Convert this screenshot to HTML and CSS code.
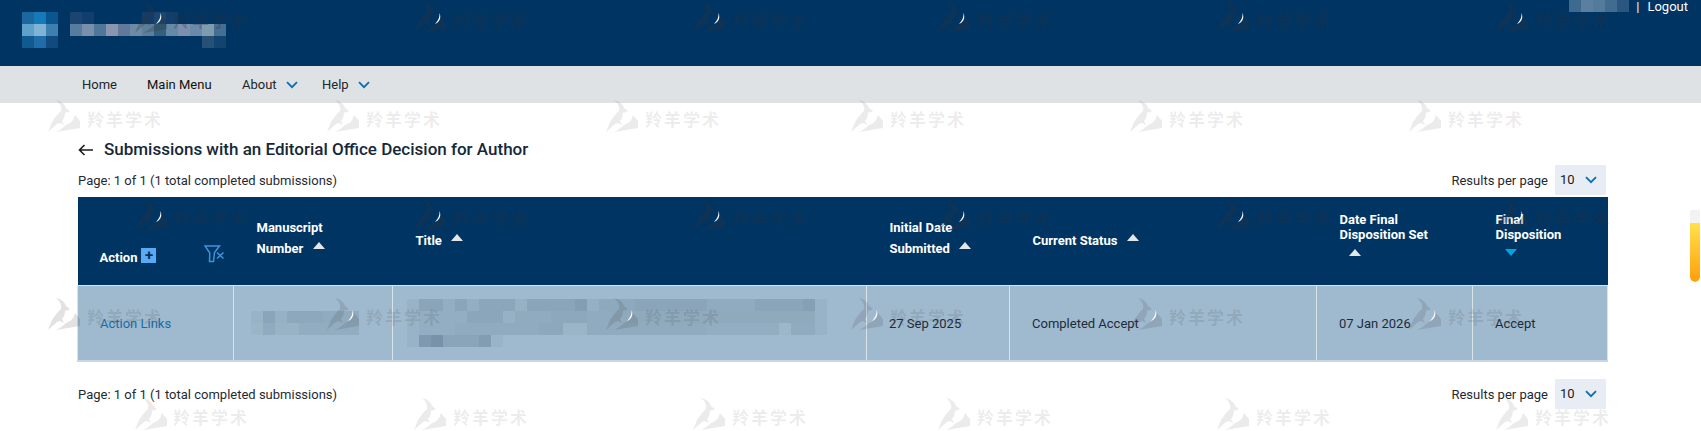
FILE: index.html
```html
<!DOCTYPE html>
<html lang="en">
<head>
    <meta charset="UTF-8">
    <meta name="viewport" content="width=device-width, initial-scale=1.0">
    <title>Submissions with an Editorial Office Decision for Author</title>
    <link rel="stylesheet" href="styles.css">
</head>
<body>
    <header class="topbar">
        <svg class="brand" width="206" height="36" viewBox="0 0 206 36">
            <rect x="0" y="0" width="12" height="12" fill="#1d679f"/><rect x="12" y="0" width="12" height="12" fill="#167ab8"/><rect x="24" y="0" width="12" height="12" fill="#0c5690"/>
            <rect x="0" y="12" width="12" height="12" fill="#5fa2c9"/><rect x="12" y="12" width="12" height="12" fill="#80b3d5"/><rect x="24" y="12" width="12" height="12" fill="#3d80b0"/>
            <rect x="0" y="24" width="12" height="12" fill="#105a92"/><rect x="12" y="24" width="12" height="12" fill="#1f6ca8"/><rect x="24" y="24" width="12" height="12" fill="#114a7e"/>
            <rect x="48" y="0" width="12" height="12" fill="#1b4470"/><rect x="60" y="0" width="12" height="12" fill="#113e6c"/><rect x="120" y="0" width="12" height="12" fill="#123d68"/><rect x="132" y="0" width="12" height="12" fill="#1a4670"/><rect x="144" y="0" width="12" height="12" fill="#123e6b"/>
            <rect x="48" y="12" width="12" height="12" fill="#567d9d"/><rect x="60" y="12" width="12" height="12" fill="#7890ac"/><rect x="72" y="12" width="12" height="12" fill="#4f7799"/><rect x="84" y="12" width="12" height="12" fill="#8a96b0"/><rect x="96" y="12" width="12" height="12" fill="#62799c"/><rect x="108" y="12" width="12" height="12" fill="#6d8ba6"/><rect x="120" y="12" width="12" height="12" fill="#5d7f9a"/><rect x="132" y="12" width="12" height="12" fill="#33607f"/><rect x="144" y="12" width="12" height="12" fill="#648aa8"/><rect x="156" y="12" width="12" height="12" fill="#7c8fae"/><rect x="168" y="12" width="12" height="12" fill="#6b89a8"/><rect x="180" y="12" width="12" height="12" fill="#7d9cae"/><rect x="192" y="12" width="12" height="12" fill="#456f90"/>
            <rect x="180" y="24" width="12" height="12" fill="#265176"/><rect x="192" y="24" width="12" height="12" fill="#134470"/>
        </svg>
        <div class="user-links">
            <svg class="user-blur" width="60" height="12" viewBox="0 0 60 12">
                <rect x="0" y="0" width="12" height="12" fill="#3f6a8f"/><rect x="12" y="0" width="12" height="12" fill="#5a7fa0"/><rect x="24" y="0" width="12" height="12" fill="#547a9c"/><rect x="36" y="0" width="12" height="12" fill="#416c90"/><rect x="48" y="0" width="12" height="12" fill="#2a5680"/>
            </svg>
            <span class="sep">|</span>
            <a href="#">Logout</a>
        </div>
    </header>

    <nav class="mainnav">
        <a href="#" class="nav-home">Home</a>
        <a href="#" class="nav-menu">Main Menu</a>
        <a href="#" class="nav-about">About <svg class="chev" width="12" height="8" viewBox="0 0 12 8"><path d="M1 1.2l5 5 5-5"/></svg></a>
        <a href="#" class="nav-help">Help <svg class="chev" width="12" height="8" viewBox="0 0 12 8"><path d="M1 1.2l5 5 5-5"/></svg></a>
    </nav>

    <main class="content">
        <h1 class="page-title">
            <svg class="back" width="15" height="12" viewBox="0 0 15 12"><path d="M15 6H1.5M6.5 1L1.5 6l5 5"/></svg>
            Submissions with an Editorial Office Decision for Author
        </h1>

        <div class="pager pager-top">
            <span>Page: 1 of 1 (1 total completed submissions)</span>
            <div class="per-page">
                <span>Results per page</span>
                <div class="select">10 <svg class="chev" width="12" height="8" viewBox="0 0 12 8"><path d="M1 1.2l5 5 5-5"/></svg></div>
            </div>
        </div>

        <table class="results">
            <colgroup>
                <col class="c1"><col class="c2"><col class="c3"><col class="c4"><col class="c5"><col class="c6"><col class="c7">
            </colgroup>
            <thead>
                <tr>
                    <th class="th-action">
                        <div class="action-head">
                            <span>Action</span>
                            <span class="plus">+</span>
                            <svg class="filter-x" width="21" height="18" viewBox="0 0 21 18"><path d="M1 1h14.500l-5 6.500-1 9H5.500L5.800 8z"/><path d="M13 7.500l6.500 6M19.500 7.500L13 13.500"/></svg>
                        </div>
                    </th>
                    <th class="th-two">Manuscript<br>Number <i class="sort-up"></i></th>
                    <th>Title <i class="sort-up"></i></th>
                    <th class="th-two">Initial Date<br>Submitted <i class="sort-up"></i></th>
                    <th>Current Status <i class="sort-up sort-wide"></i></th>
                    <th class="th-tight">Date Final<br>Disposition Set<i class="sort-up sort-block"></i></th>
                    <th class="th-tight">Final<br>Disposition<i class="sort-down sort-block"></i></th>
                </tr>
            </thead>
            <tbody>
                <tr>
                    <td><a href="#">Action Links</a></td>
                    <td class="blur-cell">
                        <svg class="ms-blur" width="108" height="24" viewBox="0 0 108 24">
                            <rect x="0" y="0" width="12" height="12" fill="#98b2c6"/><rect x="12" y="0" width="12" height="12" fill="#8aa5ba"/><rect x="24" y="0" width="12" height="12" fill="#96b0c4"/><rect x="36" y="0" width="36" height="12" fill="#8da8bd"/><rect x="72" y="0" width="36" height="12" fill="#90abbf"/>
                            <rect x="0" y="12" width="12" height="12" fill="#9ab4c8"/><rect x="12" y="12" width="12" height="12" fill="#90abc0"/><rect x="24" y="12" width="24" height="12" fill="#98b2c6"/><rect x="48" y="12" width="60" height="12" fill="#92adc1"/>
                        </svg>
                    </td>
                    <td class="blur-cell">
                        <svg class="title-blur" width="420" height="48" viewBox="0 0 420 48">
                            <rect x="0" y="0" width="12" height="36" fill="#98b3c7"/><rect x="12" y="0" width="24" height="12" fill="#8aa4b9"/><rect x="36" y="0" width="36" height="12" fill="#93aec2"/><rect x="48" y="0" width="12" height="12" fill="#8aa5ba"/><rect x="72" y="0" width="36" height="12" fill="#8ba5ba"/><rect x="108" y="0" width="12" height="12" fill="#96b0c4"/><rect x="120" y="0" width="60" height="12" fill="#8aa4b9"/><rect x="168" y="0" width="12" height="12" fill="#839eb3"/><rect x="180" y="0" width="12" height="12" fill="#95afc3"/><rect x="192" y="0" width="36" height="12" fill="#8ea9bd"/><rect x="228" y="0" width="72" height="12" fill="#8aa5ba"/><rect x="300" y="0" width="48" height="12" fill="#90abbf"/><rect x="348" y="0" width="48" height="12" fill="#8aa4b9"/><rect x="396" y="0" width="12" height="12" fill="#869fb4"/><rect x="408" y="0" width="12" height="36" fill="#98b3c7"/>
                            <rect x="12" y="12" width="48" height="12" fill="#93aec2"/><rect x="60" y="12" width="12" height="12" fill="#8ba6bb"/><rect x="72" y="12" width="24" height="12" fill="#8ba6bb"/><rect x="96" y="12" width="12" height="12" fill="#96b0c4"/><rect x="108" y="12" width="36" height="12" fill="#90abbf"/><rect x="144" y="12" width="36" height="12" fill="#8da8bc"/><rect x="180" y="12" width="24" height="12" fill="#90abbf"/><rect x="204" y="12" width="204" height="12" fill="#8fa9bd"/>
                            <rect x="12" y="24" width="36" height="12" fill="#93aec2"/><rect x="48" y="24" width="84" height="12" fill="#90abbf"/><rect x="132" y="24" width="24" height="12" fill="#8da8bc"/><rect x="156" y="24" width="24" height="12" fill="#9ab4c8"/><rect x="180" y="24" width="120" height="12" fill="#90abbf"/><rect x="300" y="24" width="72" height="12" fill="#93aec2"/><rect x="372" y="24" width="12" height="12" fill="#9cb6ca"/><rect x="384" y="24" width="24" height="12" fill="#90abbf"/>
                            <rect x="0" y="36" width="12" height="12" fill="#98b3c7"/><rect x="12" y="36" width="12" height="12" fill="#7f9ab0"/><rect x="24" y="36" width="12" height="12" fill="#7792a9"/><rect x="36" y="36" width="36" height="12" fill="#8aa4b9"/><rect x="72" y="36" width="12" height="12" fill="#829db2"/><rect x="84" y="36" width="12" height="12" fill="#99b3c7"/>
                        </svg>
                    </td>
                    <td>27 Sep 2025</td>
                    <td>Completed Accept</td>
                    <td>07 Jan 2026</td>
                    <td>Accept</td>
                </tr>
            </tbody>
        </table>

        <div class="pager pager-bottom">
            <span>Page: 1 of 1 (1 total completed submissions)</span>
            <div class="per-page">
                <span>Results per page</span>
                <div class="select">10 <svg class="chev" width="12" height="8" viewBox="0 0 12 8"><path d="M1 1.2l5 5 5-5"/></svg></div>
            </div>
        </div>
    </main>

    <div class="side-scroll"><div class="side-thumb"></div></div>

    <!-- watermark sits over the whole page -->
    <svg class="watermark" width="1701" height="431" viewBox="0 0 1701 431">
        <defs>
            <g id="mark">
                <path d="M9 0C14 1 18 4 19 8L23 11 20 12.500H18C18 16 17 19 15 21L17 25 13 23 10 24 1 32 5 22C8 18 10 14 14 11 15 7 13 3 9 0Z"/>
                <path d="M19 25C23 24 26 21 28 15L33 21V28L9 32C13 30 16 28 19 25Z"/>
                <path class="wm-glint" d="M26.500 12C27 16 25 20 22 23 26.500 21 28.500 17 26.500 12Z"/>
            </g>
        </defs>
        <g class="wm-dark">
            <g transform="translate(134 1)"><use href="#mark"/><text x="39" y="26">羚羊学术</text></g>
            <g transform="translate(413 1)"><use href="#mark"/><text x="40" y="26">羚羊学术</text></g>
            <g transform="translate(692 1)"><use href="#mark"/><text x="40" y="26">羚羊学术</text></g>
            <g transform="translate(937 1)"><use href="#mark"/><text x="40" y="26">羚羊学术</text></g>
            <g transform="translate(1216 1)"><use href="#mark"/><text x="40" y="26">羚羊学术</text></g>
            <g transform="translate(1495 1)"><use href="#mark"/><text x="40" y="26">羚羊学术</text></g>

            <g transform="translate(134 199)"><use href="#mark"/><text x="39" y="26">羚羊学术</text></g>
            <g transform="translate(413 199)"><use href="#mark"/><text x="40" y="26">羚羊学术</text></g>
            <g transform="translate(692 199)"><use href="#mark"/><text x="40" y="26">羚羊学术</text></g>
            <g transform="translate(937 199)"><use href="#mark"/><text x="40" y="26">羚羊学术</text></g>
            <g transform="translate(1216 199)"><use href="#mark"/><text x="40" y="26">羚羊学术</text></g>
            <g transform="translate(1495 199)"><use href="#mark"/><text x="40" y="26">羚羊学术</text></g>
        </g>
        <g class="wm-light">
            <g transform="translate(47 100)"><use href="#mark"/><text x="40" y="26">羚羊学术</text></g>
            <g transform="translate(326 100)"><use href="#mark"/><text x="40" y="26">羚羊学术</text></g>
            <g transform="translate(605 100)"><use href="#mark"/><text x="40" y="26">羚羊学术</text></g>
            <g transform="translate(850 100)"><use href="#mark"/><text x="40" y="26">羚羊学术</text></g>
            <g transform="translate(1129 100)"><use href="#mark"/><text x="40" y="26">羚羊学术</text></g>
            <g transform="translate(1408 100)"><use href="#mark"/><text x="40" y="26">羚羊学术</text></g>

            <g transform="translate(134 398)"><use href="#mark"/><text x="39" y="26">羚羊学术</text></g>
            <g transform="translate(413 398)"><use href="#mark"/><text x="40" y="26">羚羊学术</text></g>
            <g transform="translate(692 398)"><use href="#mark"/><text x="40" y="26">羚羊学术</text></g>
            <g transform="translate(937 398)"><use href="#mark"/><text x="40" y="26">羚羊学术</text></g>
            <g transform="translate(1216 398)"><use href="#mark"/><text x="40" y="26">羚羊学术</text></g>
            <g transform="translate(1495 398)"><use href="#mark"/><text x="40" y="26">羚羊学术</text></g>
        </g>
        <g class="wm-mid">
            <g transform="translate(47 298)"><use href="#mark"/><text x="40" y="26">羚羊学术</text></g>
            <g transform="translate(326 298)"><use href="#mark"/><text x="40" y="26">羚羊学术</text></g>
            <g transform="translate(605 298)"><use href="#mark"/><text x="40" y="26">羚羊学术</text></g>
            <g transform="translate(850 298)"><use href="#mark"/><text x="40" y="26">羚羊学术</text></g>
            <g transform="translate(1129 298)"><use href="#mark"/><text x="40" y="26">羚羊学术</text></g>
            <g transform="translate(1408 298)"><use href="#mark"/><text x="40" y="26">羚羊学术</text></g>
        </g>
    </svg>
</body>
</html>
```

FILE: styles.css
```css
html, body {
    margin: 0;
    padding: 0;
    height: 431px;
    overflow: hidden;
    background: #fff;
}
body {
    position: relative;
    font-family: Roboto, "Liberation Sans", sans-serif;
    font-size: 13px;
    color: #1f2a33;
}
a {
    text-decoration: none;
    color: inherit;
}

/* top bar */
.topbar {
    height: 66px;
    box-sizing: border-box;
    background: #003462;
    display: flex;
    justify-content: space-between;
    align-items: flex-start;
    padding: 0 13px 0 22px;
}
.brand {
    display: block;
    margin-top: 12px;
}
.user-links {
    display: flex;
    align-items: flex-start;
    color: #fff;
    line-height: 14px;
}
.user-blur {
    display: block;
    margin-right: 7px;
}
.sep {
    margin-right: 8px;
}

/* nav */
.mainnav {
    height: 37px;
    background: #dee2e5;
    display: flex;
    align-items: center;
    padding-left: 82px;
    color: #20262c;
}
.nav-home {
    width: 65px;
}
.nav-menu {
    width: 95px;
    color: #111;
}
.nav-about {
    width: 80px;
}
.chev {
    fill: none;
    stroke: #0b6fae;
    stroke-width: 1.8;
}
.mainnav .chev {
    margin-left: 6px;
}

/* content */
.content {
    padding: 0 94px 0 77px;
}
.page-title {
    margin: 0;
    padding: 37px 0 0 1px;
    font-size: 17px;
    line-height: 19px;
    font-weight: 500;
    color: #15283a;
    display: flex;
    align-items: center;
}
.back {
    fill: none;
    stroke: #1b1b1b;
    stroke-width: 1.6;
    margin-right: 11px;
}
.pager {
    display: flex;
    justify-content: space-between;
    align-items: center;
    height: 30px;
    padding-left: 1px;
    padding-right: 1px;
}
.pager-top {
    margin-top: 6px;
}
.pager-bottom {
    margin-top: 17px;
}
.per-page {
    display: flex;
    align-items: center;
}
.select {
    width: 51px;
    height: 30px;
    box-sizing: border-box;
    margin-left: 7px;
    padding-left: 5px;
    background: #e8edf5;
    line-height: 30px;
    display: flex;
    align-items: center;
    color: #1a1a1a;
}
.select .chev {
    margin-left: 10px;
}

/* table */
.results {
    width: 1530px;
    border-collapse: collapse;
    table-layout: fixed;
    margin-top: 2px;
}
.c1 { width: 156px; }
.c2 { width: 159px; }
.c3 { width: 474px; }
.c4 { width: 143px; }
.c5 { width: 307px; }
.c6 { width: 156px; }
.c7 { width: 135px; }
.results th {
    height: 88px;
    box-sizing: border-box;
    padding: 0 0 0 23px;
    background: #003462;
    color: #fff;
    font-size: 13px;
    font-weight: 700;
    line-height: 21px;
    text-align: left;
}
.results .th-two {
    padding-bottom: 6px;
}
.results .th-tight {
    line-height: 15px;
    padding-bottom: 13px;
}
.results .th-action {
    vertical-align: bottom;
    padding: 0 0 17px 22px;
}
.action-head {
    display: flex;
    align-items: center;
}
.plus {
    width: 15px;
    height: 15px;
    margin: -4px 0 0 4px;
    background: #5aa9f5;
    color: #0b2e52;
    font-size: 15px;
    line-height: 15px;
    text-align: center;
}
.filter-x {
    margin-left: 48px;
    margin-top: -6px;
    fill: none;
    stroke: #3f93dc;
    stroke-width: 1.5;
}
.sort-up, .sort-down {
    display: inline-block;
    width: 0;
    height: 0;
    margin-left: 6px;
    vertical-align: 4px;
    border-left: 6px solid transparent;
    border-right: 6px solid transparent;
}
.sort-up {
    border-bottom: 7px solid #e4e6e8;
}
.sort-down {
    border-top: 7px solid #00a5e0;
}
.sort-wide {
    margin-left: 6px;
}
.sort-block {
    display: block;
    margin: 7px 0 0 9px;
}
.results td {
    height: 76px;
    box-sizing: border-box;
    padding: 2px 0 0 22px;
    background: #9fb9ce;
    border: 1px solid #d9e3ea;
    border-bottom: 2px solid #c9d8e4;
    color: #1d2c3a;
}
.results td a {
    color: #1a6ba6;
}
.results .blur-cell {
    padding: 0;
}
.ms-blur {
    display: block;
    margin-left: 17px;
}
.title-blur {
    display: block;
    margin-left: 14px;
}

/* floating widget at the right edge */
.side-scroll {
    position: absolute;
    left: 1690px;
    top: 210px;
    width: 10px;
    height: 72px;
    border-radius: 0 0 5px 5px;
    background: linear-gradient(#f2f2f2, #f6f6f6);
    overflow: hidden;
}
.side-thumb {
    margin-top: 13px;
    height: 59px;
    border-radius: 0 0 5px 5px;
    background: linear-gradient(#ffe14d, #ff9f0a);
}

/* watermark */
.watermark {
    position: absolute;
    left: 0;
    top: 0;
    pointer-events: none;
}
.watermark text {
    font-family: "Noto Sans CJK SC", sans-serif;
    font-size: 17px;
    font-weight: 700;
    letter-spacing: 2px;
}
.wm-dark {
    fill: rgba(45, 50, 60, 0.28);
}
.wm-light {
    fill: rgba(60, 60, 60, 0.1);
}
.wm-mid {
    fill: rgba(60, 60, 60, 0.15);
}
.wm-glint {
    fill: #fff;
}
```
